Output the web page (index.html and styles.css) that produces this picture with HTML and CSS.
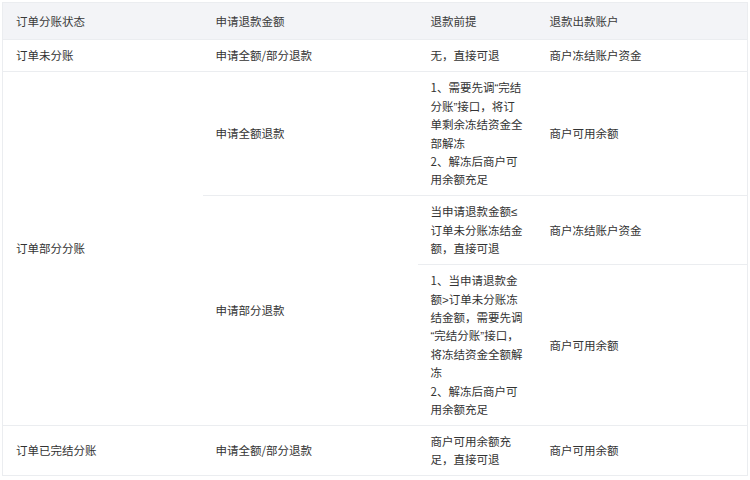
FILE: index.html
```html
<!DOCTYPE html>
<html lang="zh-CN">
<head>
<meta charset="utf-8">
<title>退款规则</title>
<link rel="stylesheet" href="styles.css">
</head>
<body>
<div class="wrap">
<table class="rules">
  <colgroup>
    <col class="c1"><col class="c2"><col class="c3"><col class="c4">
  </colgroup>
  <thead>
    <tr>
      <th>订单分账状态</th>
      <th>申请退款金额</th>
      <th>退款前提</th>
      <th>退款出款账户</th>
    </tr>
  </thead>
  <tbody>
    <tr>
      <td>订单未分账</td>
      <td>申请全额/部分退款</td>
      <td>无，直接可退</td>
      <td>商户冻结账户资金</td>
    </tr>
    <tr>
      <td rowspan="3">订单部分分账</td>
      <td>申请全额退款</td>
      <td class="multi">1、需要先调<span class="q">“</span>完结<br>分账<span class="q">”</span>接口，将订<br>单剩余冻结资金全<br>部解冻<br>2、解冻后商户可<br>用余额充足</td>
      <td>商户可用余额</td>
    </tr>
    <tr>
      <td rowspan="2">申请部分退款</td>
      <td class="multi">当申请退款金额<span class="q">≤</span><br>订单未分账冻结金<br>额，直接可退</td>
      <td>商户冻结账户资金</td>
    </tr>
    <tr>
      <td class="multi">1、当申请退款金<br>额<span class="q">&gt;</span>订单未分账冻<br>结金额，需要先调<br><span class="q">“</span>完结分账<span class="q">”</span>接口，<br>将冻结资金全额解<br>冻<br>2、解冻后商户可<br>用余额充足</td>
      <td>商户可用余额</td>
    </tr>
    <tr>
      <td>订单已完结分账</td>
      <td>申请全额/部分退款</td>
      <td class="multi">商户可用余额充<br>足，直接可退</td>
      <td>商户可用余额</td>
    </tr>
  </tbody>
</table>
</div>
</body>
</html>
```
FILE: styles.css
```css
html, body {
  margin: 0;
  padding: 0;
  background: #ffffff;
}
.wrap {
  padding: 2px 0 0 2px;
}
.rules {
  width: 745px;
  table-layout: fixed;
  border-collapse: collapse;
  border: 1px solid #ebedf0;
  font-family: "Noto Sans CJK SC", "Noto Sans", sans-serif;
  font-size: 11.5px;
  line-height: 18.4px;
  color: #333333;
}
.c1 { width: 200px; }
.c2 { width: 215px; }
.c3 { width: 119px; }
.c4 { width: 211px; }
.rules th,
.rules td {
  text-align: left;
  vertical-align: middle;
  padding: 6.3px 13px;
  border-bottom: 1px solid #ebedf0;
  font-weight: normal;
}
.rules th {
  background: #f3f4f7;
  padding-top: 8.8px;
  padding-bottom: 8.8px;
  color: #3a3a3a;
}
.rules td.multi {
  white-space: nowrap;
}
.q {
  font-family: "Liberation Sans", "Noto Sans", sans-serif;
  line-height: 0;
}
```
